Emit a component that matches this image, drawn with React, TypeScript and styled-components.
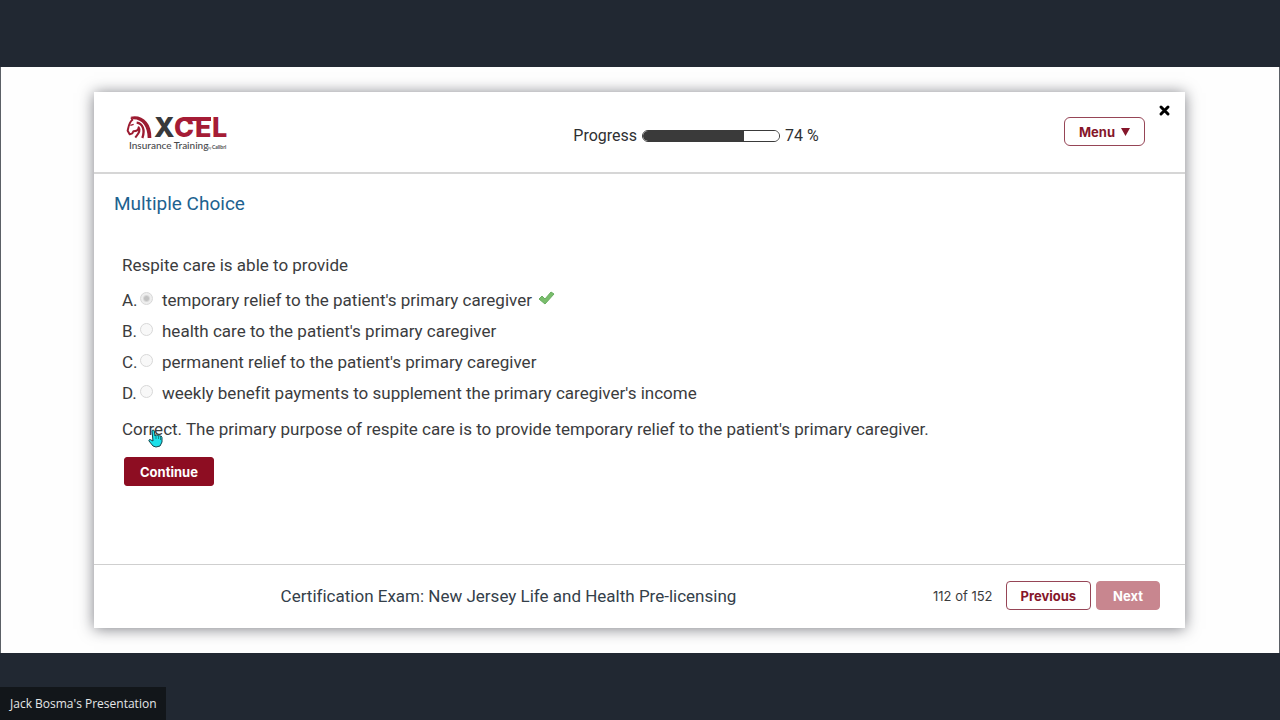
import React from "react";
import styled, { createGlobalStyle } from "styled-components";

const GlobalStyle = createGlobalStyle`
  *, *::before, *::after { box-sizing: border-box; }
  body {
    margin: 0;
    background: #212832;
    color: #3b3c3e;
    font: 17px/24px Roboto, "Liberation Sans", sans-serif;
    font-variant-ligatures: none;
  }
`;

const Page = styled.div`
  min-height: 100vh;
  display: flex;
  flex-direction: column;
`;

const TopBar = styled.div`
  flex: none;
  height: 67px;
`;

const Slide = styled.main`
  flex: 1;
  display: flex;
  padding: 25px 94px 25px 93px;
  background: #fefefe;
  border: solid #5b6066;
  border-width: 0 1px;
`;

const BottomBar = styled.footer`
  flex: none;
  display: flex;
  align-items: flex-end;
  height: 67px;
`;

const PresenterTag = styled.div`
  padding: 4px 9px 4px 10px;
  height: 33px;
  background: #12161a;
  color: #e4e6e8;
  font: 12px/25px "Open Sans", "Noto Sans", sans-serif;
`;

const Card = styled.section`
  flex: 1;
  min-width: 0;
  display: flex;
  flex-direction: column;
  background: #fff;
  box-shadow: 0 1px 14px rgba(40, 42, 52, 0.6);
`;

const CardHeader = styled.header`
  display: grid;
  grid-template-columns: 14fr auto 11fr;
  align-items: center;
  height: 82px;
  padding: 0 14px 0 31px;
  border-bottom: 2px solid #d6d6d6;
`;

const Logo = styled.svg`
  display: block;
  width: 106px;
  height: 56px;
`;

const ProgressGroup = styled.label`
  display: flex;
  align-items: center;
  gap: 5px;
  padding-top: 8px;
  color: #2f3032;
  font-size: 16px;
`;

const ProgressBar = styled.progress`
  appearance: none;
  width: 138px;
  height: 12px;
  overflow: hidden;
  border: 1px solid #3a3a3a;
  border-radius: 6px;
  background: #fff;

  &::-webkit-progress-bar { background: #fff; }
  &::-webkit-progress-value { background: #3a3a3a; }
`;

const HeaderActions = styled.div`
  display: flex;
  align-self: start;
  justify-content: flex-end;
  align-items: flex-start;
  gap: 13px;
  padding-top: 12px;
`;

const Button = styled.button<{ $filled?: boolean }>`
  height: 29px;
  padding: 0 14px;
  border: 1px solid ${(p) => (p.$filled ? "#8d0d22" : "#964556")};
  border-radius: 4px;
  background: ${(p) => (p.$filled ? "#8d0d22" : "#fff")};
  color: ${(p) => (p.$filled ? "#fff" : "#85162a")};
  font: 700 13px/20px Inter, "Liberation Sans", sans-serif;

  &:disabled {
    padding: 0 16px;
    border-color: #c8868f;
    background: #c8868f;
  }
`;

const MenuButton = styled(Button)`
  margin-top: 13px;
  border-radius: 6px;
  display: flex;
  align-items: center;
  gap: 6px;
`;

const CloseButton = styled.button`
  display: block;
  padding: 0;
  width: 13px;
  height: 13px;
  border: 0;
  background: none;

  svg { display: block; }
`;

const Content = styled.div`
  flex: 1;
  padding: 15px 20px 40px;
`;

const Title = styled.h1`
  margin: 0;
  color: #1d6290;
  font-size: 19px;
  font-weight: 400;
  line-height: 30px;
`;

const Question = styled.fieldset`
  margin: 34px 0 0;
  padding: 0 8px;
  border: 0;
  min-width: 0;
`;

const Prompt = styled.legend`
  padding: 0;
  margin-bottom: 7px;
`;

const Choices = styled.ul`
  margin: 0;
  padding: 0;
  list-style: none;
`;

const Choice = styled.li`
  display: flex;
  align-items: center;
  height: 31px;
`;

const ChoiceLabel = styled.label`
  display: grid;
  grid-template-columns: 18px 22px auto;
  align-items: center;
`;

const Radio = styled.input`
  appearance: none;
  width: 13px;
  height: 13px;
  margin: 0 0 2px;
  border: 1px solid #d8d8d8;
  border-radius: 50%;
  background: #f8f8f8;

  &:checked { background: radial-gradient(circle, #c2c2c2 0 2px, #eeeeee 4px); }
`;

const Check = styled.svg`
  margin: 0 0 4px 6px;
`;

const Feedback = styled.p`
  position: relative;
  margin: 9px 0 16px;
`;

const Pointer = styled.svg`
  position: absolute;
  left: 26px;
  top: 12px;
`;

const ContinueButton = styled(Button)`
  margin-left: 2px;
  padding: 0 15px;
  border-radius: 3px;
`;

const CardFooter = styled.footer`
  display: flex;
  align-items: center;
  height: 64px;
  padding: 0 25px 2px 0;
  border-top: 1px solid #cfcfcf;
`;

const CourseName = styled.div`
  flex: 1;
  text-align: center;
  padding-right: 10px;
  color: #34404a;
`;

const Count = styled.span`
  margin-right: 13px;
  font: 13px/20px Inter, "Liberation Sans", sans-serif;
`;

const NextButton = styled(Button)`
  margin-left: 5px;
`;

const choices = [
  { letter: "A", text: "temporary relief to the patient's primary caregiver", correct: true },
  { letter: "B", text: "health care to the patient's primary caregiver" },
  { letter: "C", text: "permanent relief to the patient's primary caregiver" },
  { letter: "D", text: "weekly benefit payments to supplement the primary caregiver's income" },
];

function XcelLogo() {
  return (
    <Logo viewBox="0 -8 106 56" role="img" aria-label="XCEL Insurance Training by Calibri">
      <g transform="translate(-15 -12) scale(.3333)" fill="#9c1b31" stroke="#9c1b31" strokeLinejoin="round">
        <path d="M62 50C94 42 126 66 124 114L113 114C113 82 98 58 70 58Z" stroke="none" />
        <path d="M80 68C98 70 106 90 97 114" fill="none" strokeWidth="7" />
        <path d="M64 52L67 60C57 66 56 80 53 92L59 103L67 100L70 94C80 94 86 90 86 82C94 92 84 102 76 113" fill="none" strokeWidth="6" />
        <path d="M61 76L71 73" fill="none" strokeWidth="4" />
      </g>
      <g fontFamily="Inter, sans-serif" fontWeight="800" fontSize="27" fill="#a51c36">
        <text x="29" y="25" fill="#38393b">X</text>
        <text x="49" y="25">C</text>
        <text x="70" y="25">E</text>
        <text x="87" y="25">L</text>
      </g>
      <path d="M60 5H86V9H60Z" fill="#a51c36" />
      <g fontFamily="Lato, sans-serif" fill="#48494b">
        <text x="4" y="37" fontSize="10" fontWeight="500">Insurance Training</text>
        <text x="83" y="37" fontSize="3">by</text>
        <text x="87" y="37" fontSize="5" fontWeight="700">Calibri</text>
      </g>
    </Logo>
  );
}

export default function App() {
  return (
    <Page>
      <GlobalStyle />
      <TopBar />
      <Slide>
        <Card>
          <CardHeader>
            <XcelLogo />
            <ProgressGroup>
              <span>Progress</span>
              <ProgressBar value={74} max={100} />
              <span>74 %</span>
            </ProgressGroup>
            <HeaderActions>
              <MenuButton type="button">
                <span>Menu</span>
                <svg width="9" height="8" viewBox="0 0 9 8" aria-hidden="true"><path d="M0 0H9L4.5 8Z" fill="currentColor" /></svg>
              </MenuButton>
              <CloseButton type="button" aria-label="Close">
                <svg width="13" height="13" viewBox="0 0 13 13"><path d="M3 3L10 10M10 3L3 10" stroke="#000" strokeWidth="3" strokeLinecap="round" /></svg>
              </CloseButton>
            </HeaderActions>
          </CardHeader>

          <Content>
            <Title>Multiple Choice</Title>
            <Question>
              <Prompt>Respite care is able to provide</Prompt>
              <Choices>
                {choices.map((choice) => (
                  <Choice key={choice.letter}>
                    <ChoiceLabel>
                      <span>{choice.letter}.</span>
                      <Radio type="radio" name="answer" disabled defaultChecked={choice.correct} />
                      <span>{choice.text}</span>
                    </ChoiceLabel>
                    {choice.correct && (
                      <Check width="17" height="14" viewBox="0 0 17 14" role="img" aria-label="Correct">
                        <path d="M1 8L4 5L7 8L13 1L16 3L7 13Z" fill="#79bd6b" stroke="#69ad61" strokeWidth="1" strokeLinejoin="round" />
                      </Check>
                    )}
                  </Choice>
                ))}
              </Choices>
              <Feedback>
                Correct. The primary purpose of respite care is to provide temporary relief to the patient's primary caregiver.
                <Pointer width="15" height="19" viewBox="0 0 15 19" aria-hidden="true">
                  <path d="M4 2C4 .8 6 .6 6.300 2L7 7L8 5.500L9.500 7L10.500 5.800L12 7.500L13 6.800L14 8.500V13L12 17L8 18L5 17L1 12C.5 10.500 2 10 3 11L5 12Z" fill="#1be0ea" stroke="#12454c" strokeWidth="1" strokeLinejoin="round" />
                  <path d="M8 7V10M10.500 7V10M12.500 8V11" stroke="#12454c" strokeWidth=".6" />
                </Pointer>
              </Feedback>
              <ContinueButton type="button" $filled>Continue</ContinueButton>
            </Question>
          </Content>

          <CardFooter>
            <CourseName>Certification Exam: New Jersey Life and Health Pre-licensing</CourseName>
            <Count>112 of 152</Count>
            <Button type="button">Previous</Button>
            <NextButton type="button" $filled disabled>Next</NextButton>
          </CardFooter>
        </Card>
      </Slide>
      <BottomBar>
        <PresenterTag>Jack Bosma's Presentation</PresenterTag>
      </BottomBar>
    </Page>
  );
}
